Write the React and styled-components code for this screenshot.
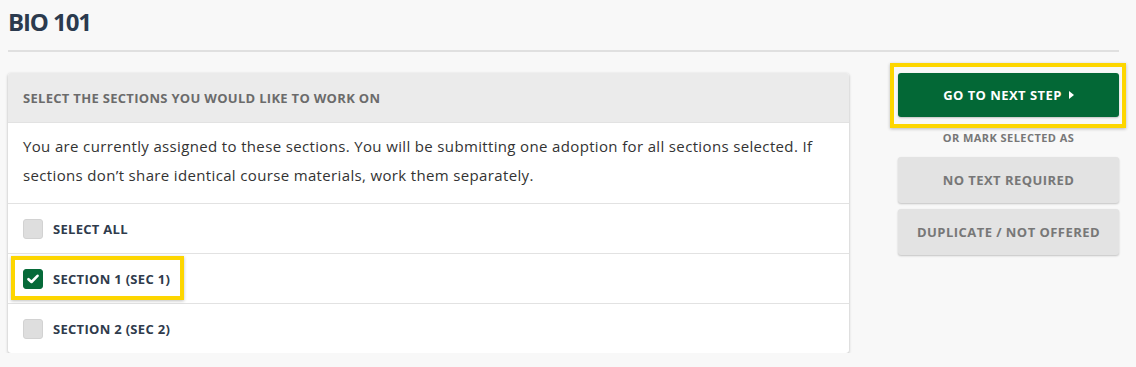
import React, { useState } from "react";
import styled, { createGlobalStyle, css } from "styled-components";

const GlobalStyle = createGlobalStyle`
  html, body {
    margin: 0;
    background: #f8f8f8;
  }
  body {
    font-family: "Open Sans", "Liberation Sans", sans-serif;
    color: #333;
  }
`;

const Page = styled.div`
  padding: 7px 17px 0 8px;
`;

const Title = styled.h1`
  margin: 0;
  font-size: 24px;
  line-height: 30px;
  font-weight: 700;
  color: #2b3a4e;
  letter-spacing: -1.1px;
`;

const Divider = styled.hr`
  margin: 13px 0 21px;
  border: 0;
  border-top: 2px solid #e0e0e0;
`;

const Layout = styled.div`
  display: flex;
  align-items: flex-start;
  gap: 49px;
`;

const Card = styled.section`
  width: 841px;
  background: #fff;
  border-radius: 3px;
  box-shadow: 0 1px 3px rgba(0, 0, 0, 0.28);
  overflow: hidden;
`;

const CardHeader = styled.div`
  height: 49px;
  display: flex;
  align-items: center;
  padding: 0 15px;
  background: #ebebeb;
  border-bottom: 1px solid #e2e2e2;
  font-size: 13px;
  font-weight: 700;
  color: #6b6b6b;
  letter-spacing: 0.3px;
`;

const Intro = styled.p`
  margin: 0;
  padding: 9px 15px 13px;
  font-size: 15px;
  line-height: 29px;
  color: #333;
  letter-spacing: 0.35px;
  border-bottom: 1px solid #e2e2e2;
`;

const Row = styled.label`
  height: 49px;
  display: flex;
  align-items: center;
  padding: 0 15px;
  border-bottom: 1px solid #e2e2e2;
  cursor: pointer;
  &:last-child {
    border-bottom: 0;
  }
`;

const Highlightable = styled.span`
  position: relative;
  display: inline-flex;
  align-items: center;
  gap: 10px;
  ${(p) =>
    p.$highlight &&
    css`
      &::after {
        content: "";
        position: absolute;
        left: -12px;
        right: -14px;
        top: -13px;
        bottom: -11px;
        border: 4px solid #fdd600;
        box-shadow: 0 1px 3px rgba(0, 0, 0, 0.25);
        pointer-events: none;
      }
    `}
`;

const Box = styled.span`
  width: 20px;
  height: 20px;
  border-radius: 3px;
  display: flex;
  align-items: center;
  justify-content: center;
  background: ${(p) => (p.$checked ? "#066a39" : "#dedede")};
  border: 1px solid ${(p) => (p.$checked ? "#066a39" : "#d2d2d2")};
  box-sizing: border-box;
`;

const RowLabel = styled.span`
  font-size: 13px;
  font-weight: 700;
  color: #2f3b4c;
  letter-spacing: 0.3px;
`;

const Aside = styled.aside`
  width: 221px;
  display: flex;
  flex-direction: column;
  align-items: stretch;
`;

const Framed = styled.div`
  position: relative;
  &::after {
    content: "";
    position: absolute;
    left: -8px;
    right: -7px;
    top: -10px;
    bottom: -11px;
    border: 4px solid #fdd600;
    box-shadow: 0 1px 3px rgba(0, 0, 0, 0.25);
    pointer-events: none;
  }
`;

const Button = styled.button`
  width: 100%;
  height: ${(p) => (p.$primary ? "44px" : "46px")};
  border: 0;
  border-radius: 3px;
  font-family: inherit;
  font-size: 13px;
  font-weight: 700;
  letter-spacing: 0.45px;
  cursor: pointer;
  display: flex;
  align-items: center;
  justify-content: center;
  gap: 7px;
  background: ${(p) => (p.$primary ? "#036836" : "#e3e3e3")};
  color: ${(p) => (p.$primary ? "#fff" : "#777")};
  box-shadow: 0 1px 2px rgba(0, 0, 0, 0.22);
`;

const Or = styled.div`
  margin: 13px 0 12px;
  text-align: center;
  font-size: 11px;
  font-weight: 700;
  letter-spacing: 0.45px;
  color: #777;
`;

const Stack = styled.div`
  display: flex;
  flex-direction: column;
  gap: 6px;
`;

const Check = () => (
  <svg width="12" height="10" viewBox="0 0 12 10">
    <path d="M1.5 5.2 L4.5 8 L10.5 1.8" fill="none" stroke="#fff" strokeWidth="2.6" strokeLinecap="round" strokeLinejoin="round" />
  </svg>
);

const Caret = () => (
  <svg width="5" height="8" viewBox="0 0 5 8">
    <path d="M0 0 L5 4 L0 8 Z" fill="#fff" />
  </svg>
);

const sections = [
  { id: "all", label: "SELECT ALL" },
  { id: "s1", label: "SECTION 1 (SEC 1)", highlight: true },
  { id: "s2", label: "SECTION 2 (SEC 2)" },
];

export default function App() {
  const [checked, setChecked] = useState({ s1: true });

  const toggle = (id) => setChecked((c) => ({ ...c, [id]: !c[id] }));

  return (
    <>
      <GlobalStyle />
      <Page>
        <Title>BIO 101</Title>
        <Divider />
        <Layout>
          <Card>
            <CardHeader>SELECT THE SECTIONS YOU WOULD LIKE TO WORK ON</CardHeader>
            <Intro>
              You are currently assigned to these sections. You will be submitting one adoption for all sections selected. If
              sections don’t share identical course materials, work them separately.
            </Intro>
            {sections.map((s) => (
              <Row key={s.id} onClick={() => toggle(s.id)}>
                <Highlightable $highlight={s.highlight}>
                  <Box $checked={!!checked[s.id]}>{checked[s.id] && <Check />}</Box>
                  <RowLabel>{s.label}</RowLabel>
                </Highlightable>
              </Row>
            ))}
          </Card>
          <Aside>
            <Framed>
              <Button $primary>
                GO TO NEXT STEP <Caret />
              </Button>
            </Framed>
            <Or>OR MARK SELECTED AS</Or>
            <Stack>
              <Button>NO TEXT REQUIRED</Button>
              <Button>DUPLICATE / NOT OFFERED</Button>
            </Stack>
          </Aside>
        </Layout>
      </Page>
    </>
  );
}
